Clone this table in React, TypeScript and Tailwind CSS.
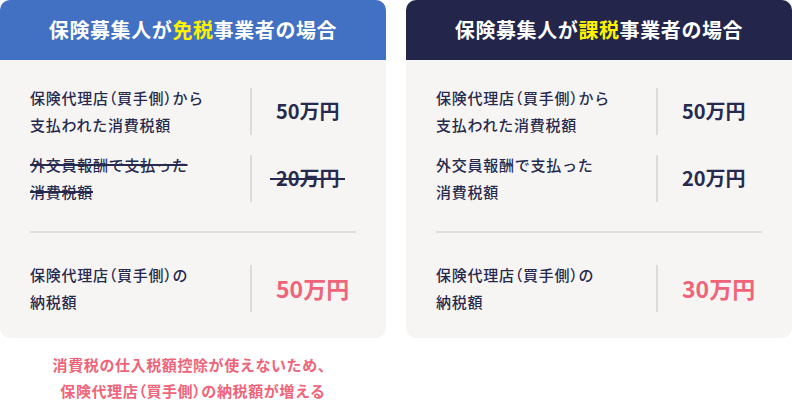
import React from 'react';

type Row = {
  label: [string, string];
  value: string;
  struck?: boolean;
};

const rowsExempt: Row[] = [
  { label: ['保険代理店（買手側）から', '支払われた消費税額'], value: '50万円' },
  { label: ['外交員報酬で支払った', '消費税額'], value: '20万円', struck: true },
];

const rowsTaxable: Row[] = [
  { label: ['保険代理店（買手側）から', '支払われた消費税額'], value: '50万円' },
  { label: ['外交員報酬で支払った', '消費税額'], value: '20万円' },
];

// narrow the full-width brackets like the reference does
const Text: React.FC<{ s: string }> = ({ s }) => (
  <>
    {s.split(/([（）])/).map((p, i) =>
      p === '（' || p === '）' ? (
        <span key={i} className="[font-feature-settings:'palt']">
          {p}
        </span>
      ) : (
        <React.Fragment key={i}>{p}</React.Fragment>
      )
    )}
  </>
);

const LineRow: React.FC<{ row: Row; pink?: boolean }> = ({ row, pink }) => (
  <div className="flex items-center h-[54px]">
    <div className="w-[220px] text-[15px] leading-[27px] tracking-[0.05em] font-medium text-[#262a4f]">
      {row.label.map((l) => (
        <div key={l}>
          <span className={row.struck ? 'line-through decoration-2 decoration-[#262a4f]' : ''}>
            <Text s={l} />
          </span>
        </div>
      ))}
    </div>
    <div className="w-[2px] h-[47px] bg-[#dddad8]" />
    <div className="pl-[24px]">
      {row.struck ? (
        <span className="relative inline-block text-[20px] font-bold text-[#262a4f]">
          {row.value}
          <span className="absolute left-[-6px] right-[-5px] top-1/2 h-[2px] bg-[#262a4f]" />
        </span>
      ) : (
        <span
          className={
            pink
              ? 'text-[23px] font-bold text-[#ef6479]'
              : 'text-[20px] font-bold text-[#262a4f]'
          }
        >
          {row.value}
        </span>
      )}
    </div>
  </div>
);

const Card: React.FC<{
  headerBg: string;
  highlight: string;
  rows: Row[];
  total: string;
}> = ({ headerBg, highlight, rows, total }) => (
  <div className="w-[386px] rounded-[10px] overflow-hidden bg-[#f7f5f3]">
    <div className={`${headerBg} h-[60px] flex items-center justify-center text-white text-[20px] font-bold tracking-[0.03em]`}>
      保険募集人が<span className="text-[#fff200]">{highlight}</span>事業者の場合
    </div>
    <div className="pt-[24px] pb-[23px] px-[30px]">
      <div className="flex flex-col gap-[13px]">
        {rows.map((r, i) => (
          <LineRow key={i} row={r} />
        ))}
      </div>
      <div className="h-[2px] bg-[#e0dedc] mt-[26px] mb-[28px]" />
      <LineRow row={{ label: ['保険代理店（買手側）の', '納税額'], value: total }} pink />
    </div>
  </div>
);

export default function App() {
  return (
    <div
      className="w-[792px] h-[400px] bg-white overflow-hidden"
      style={{ fontFamily: '"Noto Sans CJK JP", "Noto Sans", sans-serif' }}
    >
      <div className="flex gap-[20px] items-start">
        <div className="flex flex-col">
          <Card headerBg="bg-[#4270c3]" highlight="免税" rows={rowsExempt} total="50万円" />
          <div className="mt-[14px] text-center text-[15px] leading-[26px] font-bold text-[#ef6479] tracking-[0.04em]">
            <div>消費税の仕入税額控除が使えないため、</div>
            <div>
              <Text s="保険代理店（買手側）の納税額が増える" />
            </div>
          </div>
        </div>
        <Card headerBg="bg-[#23254b]" highlight="課税" rows={rowsTaxable} total="30万円" />
      </div>
    </div>
  );
}
